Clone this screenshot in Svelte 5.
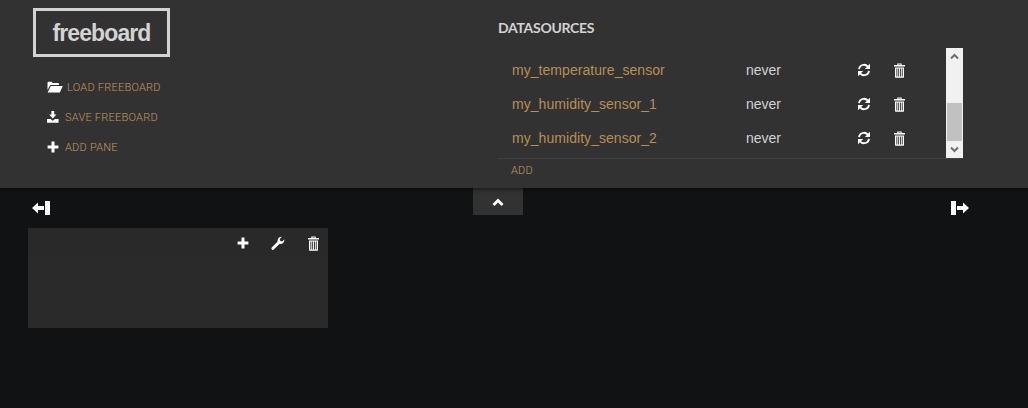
<script>
  const sources = ['my_temperature_sensor', 'my_humidity_sensor_1', 'my_humidity_sensor_2'];
  const menu = [
    { label: 'LOAD FREEBOARD', icon: 'folder' },
    { label: 'SAVE FREEBOARD', icon: 'save' },
    { label: 'ADD PANE', icon: 'plus' }
  ];
</script>

{#snippet plus()}
  <svg class="ico" width="12" height="12" viewBox="0 0 12 12"><path d="M4.5 0.5h3v3.9h3.9v3.2H7.5v3.9h-3V7.6H.6V4.4h3.9z" fill="#fff"/></svg>
{/snippet}
{#snippet trash()}
  <svg class="ico" width="13" height="15" viewBox="0 0 13 15"><path d="M4.3 2V0.6h4.4V2H12v1.6H1V2zM5.3 1.4V2h2.4v-.6z" fill="#fff" fill-rule="evenodd"/><path d="M2 4.4h9V14a.7.7 0 0 1-.7.7H2.7A.7.7 0 0 1 2 14zM3.4 5.6v7.8h.9V5.6zM5.2 5.6v7.8h.9V5.6zM7 5.6v7.8h.9V5.6zM8.8 5.6v7.8h.9V5.6z" fill="#fff" fill-rule="evenodd"/></svg>
{/snippet}
{#snippet refresh()}
  <svg class="ico" width="14" height="14" viewBox="0 0 14 14"><path d="M2 6.2A5 5 0 0 1 10.8 3.6" fill="none" stroke="#fff" stroke-width="1.8"/><path d="M13 0.8v5.2H7.8z" fill="#fff"/><path d="M12 7.8A5 5 0 0 1 3.2 10.4" fill="none" stroke="#fff" stroke-width="1.8"/><path d="M1 13.2V8h5.2z" fill="#fff"/></svg>
{/snippet}
{#snippet wrench()}
  <svg class="ico" width="14" height="14" viewBox="0 0 14 14"><path d="M0.8 11.4L6.6 5.6C6 3.2 7.8 0.6 11 0.8L8.9 3l.4 2 2 .5 2-2.2c.4 3-2 5.2-4.6 4.5L2.8 13.6a1.2 1.2 0 0 1-1.8 0 1.6 1.6 0 0 1-.2-2.2z" fill="#fff"/></svg>
{/snippet}
{#snippet folder()}
  <svg class="ico" width="16" height="12" viewBox="0 0 16 12"><path d="M0.5 9V1.6L1.3.8h3.4l1 1.2h5.6l.7.7V4H3.2z" fill="#fff"/><path d="M3.8 4.9H15.8L12.8 11.6H0.6z" fill="#fff"/></svg>
{/snippet}
{#snippet save()}
  <svg class="ico" width="12" height="12" viewBox="0 0 12 12"><path d="M4.4 0h2.8v3.6h2.2L5.8 7.4 2.2 3.6h2.2z" fill="#fff"/><path d="M0 8h3.6l2.2 1.7L8 8h3.6v3.7H0z" fill="#fff"/></svg>
{/snippet}

<div class="page">
  <header class="head">
    <div class="left">
      <h1 class="logo">freeboard</h1>
      <ul class="menu">
        {#each menu as m}
          <li class="menu-item" class:first={m.icon === 'folder'}>
            <span class="menu-icon">
              {#if m.icon === 'folder'}{@render folder()}{:else if m.icon === 'save'}{@render save()}{:else}{@render plus()}{/if}
            </span>
            <span>{m.label}</span>
          </li>
        {/each}
      </ul>
    </div>
    <section class="sources">
      <h2 class="title">DATASOURCES</h2>
      <div class="table">
        <div class="rows">
          {#each sources as s}
            <div class="row">
              <span class="name">{s}</span>
              <span class="time">never</span>
              <span class="act">{@render refresh()}</span>
              <span class="act second">{@render trash()}</span>
            </div>
          {/each}
        </div>
        <div class="scroll">
          <div class="arrow"><svg width="9" height="7" viewBox="0 0 9 7"><path d="M1 5.5L4.5 2 8 5.5" fill="none" stroke="#6e6e6e" stroke-width="2"/></svg></div>
          <div class="track"><div class="thumb"></div></div>
          <div class="arrow"><svg width="9" height="7" viewBox="0 0 9 7"><path d="M1 1.5L4.5 5 8 1.5" fill="none" stroke="#6e6e6e" stroke-width="2"/></svg></div>
        </div>
      </div>
      <div class="add">ADD</div>
    </section>
  </header>

  <div class="bar">
    <svg class="ico grip" width="18" height="14" viewBox="0 0 18 14"><path d="M13 0h5v14h-5z" fill="#fff"/><path d="M0 7l6-5.5V5h6v4H6v3.5z" fill="#fff"/></svg>
    <div class="tab"><svg width="12" height="9" viewBox="0 0 12 9"><path d="M1.5 7L6 2.5 10.5 7" fill="none" stroke="#fff" stroke-width="2.8"/></svg></div>
    <svg class="ico grip end" width="18" height="14" viewBox="0 0 18 14"><path d="M0 0h5v14H0z" fill="#fff"/><path d="M18 7l-6-5.5V5H6v4h6v3.5z" fill="#fff"/></svg>
  </div>

  <div class="board">
    <article class="pane">
      <div class="pane-head">
        {@render plus()}
        {@render wrench()}
        {@render trash()}
      </div>
    </article>
  </div>
</div>

<style>
  :global(body) { margin: 0; background: #101214; }
  .page { width: 1028px; height: 408px; overflow: hidden; background: #101214; font-family: "Liberation Sans", Arial, sans-serif; }
  .ico { display: block; flex: none; }

  .head { height: 188px; box-sizing: border-box; background: #323232; display: flex; box-shadow: 0 1px 4px rgba(0,0,0,.6); position: relative; }
  .left { width: 498px; padding: 8px 0 0 33px; box-sizing: border-box; }
  .logo { width: 137px; height: 49px; box-sizing: border-box; margin: 0; border: 3px solid #d3d3d3; color: #d3d3d3; font-size: 23px; font-weight: 700; letter-spacing: -0.9px; line-height: 45px; text-align: center; }
  .menu { list-style: none; margin: 15px 0 0 14px; padding: 0; }
  .menu-item { height: 30px; display: flex; align-items: center; gap: 6px; color: #c2995a; font-family: Roboto, sans-serif; font-weight: 300; font-size: 11px; letter-spacing: 0.24px; }
  .menu-icon { width: 12px; display: flex; }
  .menu-item.first .menu-icon { width: 14px; }

  .sources { width: 465px; }
  .title { margin: 0; padding-top: 19px; height: 29px; font-family: Lato, sans-serif; font-size: 14px; font-weight: 700; color: #d3d3d3; line-height: 17px; letter-spacing: -0.3px; }
  .table { display: flex; height: 110px; border-bottom: 1px solid #424242; box-sizing: content-box; }
  .rows { flex: 1; padding-top: 5px; }
  .row { height: 34px; display: flex; align-items: center; font-size: 14px; color: #d3d3d3; }
  .name { width: 234px; padding-left: 14px; color: #b88f51; letter-spacing: 0.05px; }
  .time { width: 100px; }
  .act { width: 35px; display: flex; justify-content: center; }
  .act.second { margin-left: 1px; }
  .scroll { width: 17px; background: #f1f1f1; display: flex; flex-direction: column; }
  .arrow { height: 17px; display: flex; align-items: center; justify-content: center; }
  .track { flex: 1; padding: 38px 1px 0; box-sizing: border-box; }
  .thumb { height: 38px; background: #c1c1c1; }
  .add { padding: 5px 0 0 13px; font-family: Roboto, sans-serif; font-weight: 300; font-size: 11px; letter-spacing: 0.24px; line-height: 13px; color: #c2995a; }

  .bar { height: 40px; display: grid; grid-template-columns: 473px 50px 1fr; }
  .grip { margin: 13px 0 0 32px; }
  .grip.end { margin: 13px 59px 0 auto; }
  .tab { height: 27px; background: #323232; display: flex; justify-content: center; padding-top: 10px; box-sizing: border-box; }

  .board { padding-left: 28px; }
  .pane { width: 300px; height: 100px; background: #2a2a2a; }
  .pane-head { height: 30px; display: flex; align-items: center; justify-content: flex-end; gap: 22px; padding-right: 8px; box-sizing: border-box; background: #292929; }
</style>
